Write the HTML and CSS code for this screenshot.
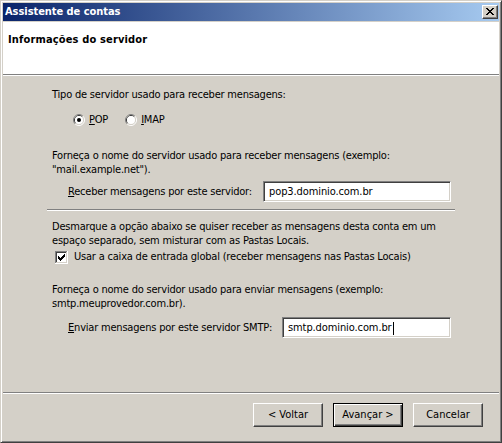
FILE: index.html
```html
<!DOCTYPE html>
<html lang="pt-BR">
<head>
<meta charset="utf-8">
<title>Assistente de contas</title>
<link rel="stylesheet" href="styles.css">
</head>
<body>
<div class="window">
  <div class="titlebar">
    <span class="title">Assistente de contas</span>
    <div class="close-btn">
      <svg width="8" height="7" viewBox="0 0 8 7" shape-rendering="crispEdges"><path d="M0 0h2v1H0zM6 0h2v1H6zM1 1h2v1H1zM5 1h2v1H5zM2 2h4v1H2zM3 3h2v1H3zM2 4h4v1H2zM1 5h2v1H1zM5 5h2v1H5zM0 6h2v1H0zM6 6h2v1H6z" fill="#000"/></svg>
    </div>
  </div>
  <div class="header">
    <div class="heading">Informações do servidor</div>
  </div>
  <div class="etched"></div>
  <div class="content">
    <p class="text first">Tipo de servidor usado para receber mensagens:</p>
    <div class="radios">
      <span class="option">
        <svg class="radio" width="12" height="12" viewBox="0 0 12 12"><path d="M2.11 9.89A5.5 5.5 0 0 1 9.89 2.11" fill="none" stroke="#808080"/><path d="M9.89 2.11A5.5 5.5 0 0 1 2.11 9.89" fill="none" stroke="#fff"/><path d="M2.82 9.18A4.5 4.5 0 0 1 9.18 2.82" fill="none" stroke="#404040"/><path d="M9.18 2.82A4.5 4.5 0 0 1 2.82 9.18" fill="none" stroke="#d4d0c8"/><circle cx="6" cy="6" r="4" fill="#fff"/><circle cx="6" cy="6" r="2" fill="#000"/></svg>
        <span><u>P</u>OP</span>
      </span>
      <span class="option second">
        <svg class="radio" width="12" height="12" viewBox="0 0 12 12"><path d="M2.11 9.89A5.5 5.5 0 0 1 9.89 2.11" fill="none" stroke="#808080"/><path d="M9.89 2.11A5.5 5.5 0 0 1 2.11 9.89" fill="none" stroke="#fff"/><path d="M2.82 9.18A4.5 4.5 0 0 1 9.18 2.82" fill="none" stroke="#404040"/><path d="M9.18 2.82A4.5 4.5 0 0 1 2.82 9.18" fill="none" stroke="#d4d0c8"/><circle cx="6" cy="6" r="4" fill="#fff"/></svg>
        <span><u>I</u>MAP</span>
      </span>
    </div>
    <p class="text gap-incoming">Forneça o nome do servidor usado para receber mensagens (exemplo:<br>"mail.example.net").</p>
    <div class="field-row row-in">
      <span class="label"><u>R</u>eceber mensagens por este servidor:</span>
      <div class="textbox in-box">pop3.dominio.com.br</div>
    </div>
    <div class="etched mid"></div>
    <p class="text gap-desm">Desmarque a opção abaixo se quiser receber as mensagens desta conta em um<br>espaço separado, sem misturar com as Pastas Locais.</p>
    <div class="check-row">
      <svg class="checkbox" width="13" height="13" viewBox="0 0 13 13" shape-rendering="crispEdges"><rect x="0" y="0" width="13" height="13" fill="#fff"/><path d="M0 0h12v1H1v11H0z" fill="#808080"/><path d="M1 1h10v1H2v9H1z" fill="#404040"/><path d="M1 11h11v1H1zM11 1h1v11h-1z" fill="#d4d0c8"/><path d="M3 5h1v3H3zM4 6h1v3H4zM5 7h1v3H5zM6 6h1v3H6zM7 5h1v3H7zM8 4h1v3H8zM9 3h1v3H9z" fill="#000"/></svg>
      <span>Usar a caixa de entrada global (receber mensagens nas Pastas Locais)</span>
    </div>
    <p class="text gap-out">Forneça o nome do servidor usado para enviar mensagens (exemplo:<br>smtp.meuprovedor.com.br).</p>
    <div class="field-row row-out">
      <span class="label"><u>E</u>nviar mensagens por este servidor SMTP:</span>
      <div class="textbox out-box">smtp.dominio.com.br<span class="caret"></span></div>
    </div>
  </div>
  <div class="footer">
    <div class="etched"></div>
    <div class="buttons">
      <div class="btn">&lt; Voltar</div>
      <div class="btn default">Avançar &gt;</div>
      <div class="btn">Cancelar</div>
    </div>
  </div>
</div>
</body>
</html>
```

FILE: styles.css
```css
html, body {
  margin: 0;
  padding: 0;
  background: #d4d0c8;
}

body {
  font-family: "DejaVu Sans Condensed", "DejaVu Sans", sans-serif;
  font-stretch: condensed;
  font-size: 11px;
  line-height: 14px;
  color: #000;
}

.window {
  width: 502px;
  height: 443px;
  box-sizing: border-box;
  border: 1px solid;
  border-color: #d4d0c8 #404040 #404040 #d4d0c8;
  box-shadow: inset 1px 1px #fff, inset -1px -1px #808080;
  padding: 2px;
  display: flex;
  flex-direction: column;
  background: #d4d0c8;
}

.titlebar {
  height: 18px;
  flex: none;
  display: flex;
  align-items: center;
  justify-content: space-between;
  padding: 0 1px 0 2px;
  background: linear-gradient(to right, #0a246a 0%, #a6caf0 100%);
}

.title {
  color: #fff;
  font-weight: bold;
  letter-spacing: -0.05px;
}

.close-btn {
  width: 16px;
  height: 14px;
  box-sizing: border-box;
  border: 1px solid;
  border-color: #fff #404040 #404040 #fff;
  box-shadow: inset -1px -1px #808080;
  background: #d4d0c8;
  display: flex;
  align-items: center;
  justify-content: center;
  padding: 0 1px 1px 0;
}

.close-btn svg {
  display: block;
}

.header {
  margin-top: 1px;
  height: 52px;
  flex: none;
  background: #fff;
}

.heading {
  padding: 11px 0 0 5px;
  font-weight: bold;
  letter-spacing: 0.15px;
}

.etched {
  flex: none;
  height: 0;
  border-top: 1px solid #808080;
  border-bottom: 1px solid #fff;
}

.content {
  flex: 1;
  padding: 0 48px 0 49px;
  letter-spacing: -0.2px;
}

.text {
  margin: 0;
}

.first {
  margin-top: 12px;
}

.radios {
  margin-top: 11px;
  height: 14px;
  display: flex;
  align-items: center;
  padding-left: 21px;
}

.option {
  display: inline-flex;
  align-items: center;
  gap: 4px;
}

.option.second {
  margin-left: 17px;
}

.radio {
  display: block;
  flex: none;
}

.gap-incoming {
  margin-top: 22px;
}

.field-row {
  display: flex;
  align-items: center;
  justify-content: space-between;
  height: 21px;
  padding-left: 16px;
}

.row-in {
  margin-top: 4px;
}

.row-out {
  margin-top: 6px;
}

.textbox {
  height: 21px;
  box-sizing: border-box;
  border: 1px solid;
  border-color: #808080 #fff #fff #808080;
  box-shadow: inset 1px 1px #404040, inset -1px -1px #d4d0c8;
  background: #fff;
  padding: 3px 0 0 5px;
  line-height: 14px;
  display: flex;
  align-items: flex-start;
  letter-spacing: -0.1px;
}

.in-box {
  width: 188px;
}

.out-box {
  width: 169px;
}

.caret {
  display: inline-block;
  width: 1px;
  height: 13px;
  margin-top: 1px;
  margin-left: 1px;
  background: #000;
}

.etched.mid {
  margin: 7px -4px 0 -5px;
}

.gap-desm {
  margin-top: 9px;
}

.check-row {
  margin-top: 2px;
  height: 14px;
  display: flex;
  align-items: center;
  padding-left: 3px;
  gap: 6px;
}

.checkbox {
  display: block;
  flex: none;
}

.gap-out {
  margin-top: 19px;
}

.footer {
  flex: none;
  height: 48px;
}

.buttons {
  display: flex;
  justify-content: flex-end;
  gap: 10px;
  padding: 9px 16px 0 0;
}

.btn {
  width: 70px;
  height: 24px;
  box-sizing: border-box;
  border: 1px solid;
  border-color: #fff #404040 #404040 #fff;
  box-shadow: inset -1px -1px #808080;
  background: #d4d0c8;
  display: flex;
  align-items: center;
  justify-content: center;
  padding-bottom: 1px;
}

.btn.default {
  border-color: #000;
  box-shadow: inset 1px 1px #fff, inset -1px -1px #404040, inset -2px -2px #808080;
}
```
